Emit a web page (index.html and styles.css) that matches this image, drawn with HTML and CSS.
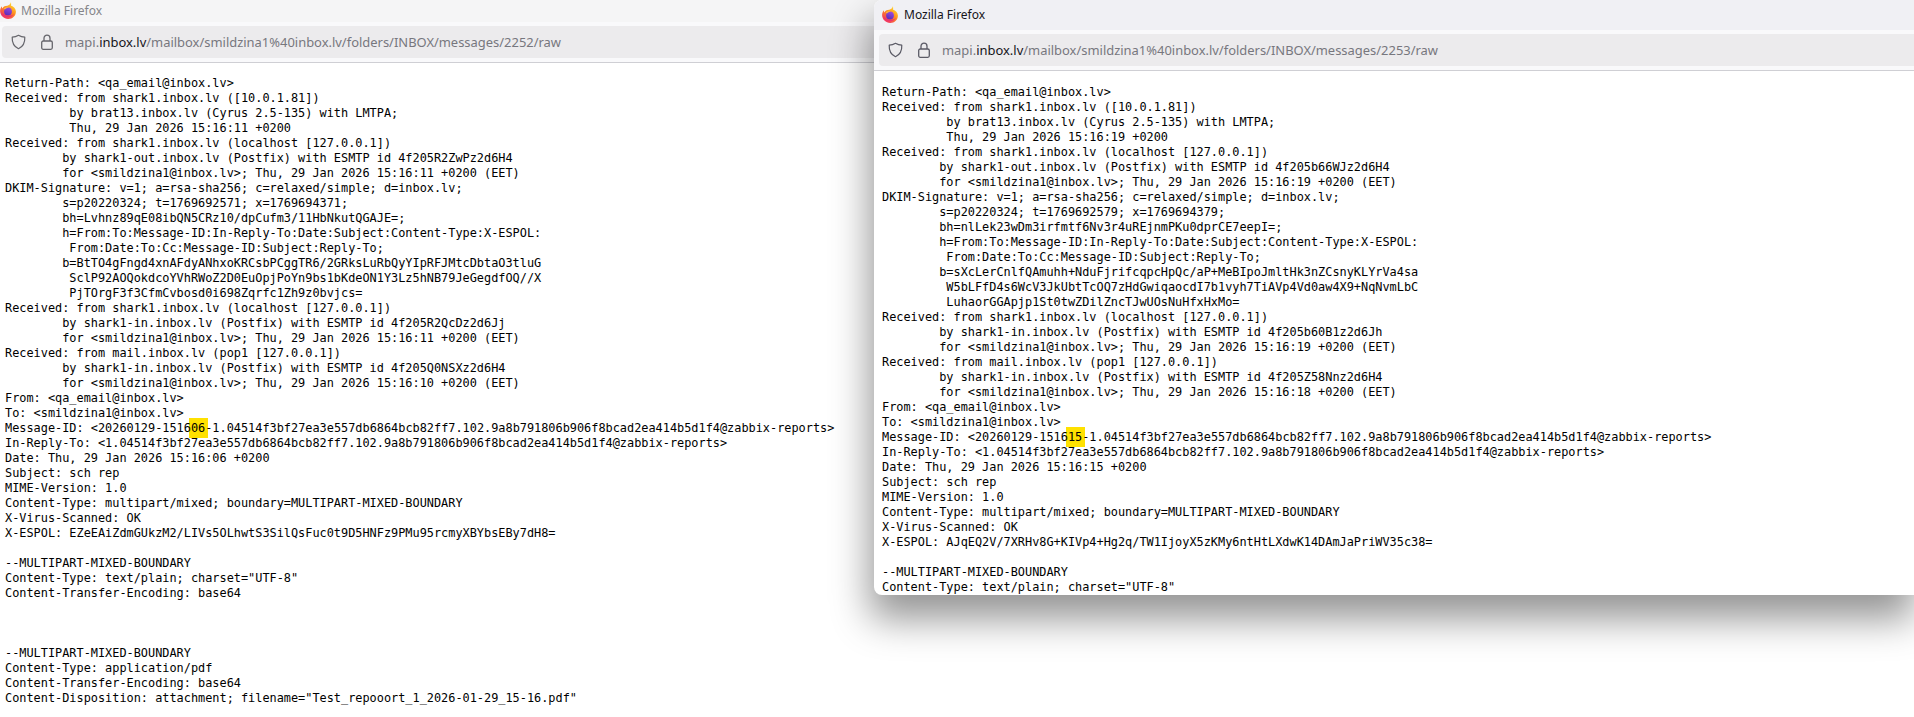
FILE: index.html
```html
<!DOCTYPE html>
<html lang="en">
<head>
<meta charset="utf-8">
<title>Mozilla Firefox</title>
<link rel="stylesheet" href="styles.css">
</head>
<body>
<svg class="defs" width="0" height="0" aria-hidden="true">
<defs>
<linearGradient id="fx-outer" x1="0.8" y1="0.05" x2="0.15" y2="0.95">
<stop offset="0" stop-color="#ffe02e"/><stop offset="0.45" stop-color="#ff8a1f"/><stop offset="1" stop-color="#f0286a"/>
</linearGradient>
<linearGradient id="fx-inner" x1="0.7" y1="0" x2="0.3" y2="1">
<stop offset="0" stop-color="#9a4ce0"/><stop offset="1" stop-color="#5a2bb8"/>
</linearGradient>
<symbol id="firefox" viewBox="0 0 16 17">
<path fill="url(#fx-outer)" d="M10.800 0.200c0.500 1.500 0.400 2.500 0.100 3.400C13.700 4.600 15.800 6.800 15.900 9.400c0.100 4.200-3.300 7.500-7.700 7.500C3.800 16.900 0.100 13.500 0.100 9.100c0-1.900 0.700-3.600 1.700-4.800 0 1 0.200 1.700 0.700 2.100C3.100 5 4.300 4 5.600 3.900 8 3.700 10.400 2.800 10.800 0.200z"/>
<circle cx="8" cy="9.500" r="3.900" fill="url(#fx-inner)"/>
<path fill="#ffb43a" d="M3.800 6.300c1.600-1.400 3.800-1.700 5.600-0.800 -1.800 0-3.100 0.500-4 1.600C5.200 7.800 4.100 7.400 3.800 6.300z"/>
<path fill="#e8336f" d="M1.300 10.200c0.700 3.100 3.600 5 6.800 5 2.800 0 5-1.500 6.200-3.700 -1.400 1.500-3.400 2.300-5.600 2.200C5.900 13.600 3.200 12.400 1.300 10.200z"/>
</symbol>
<symbol id="shield" viewBox="0 0 16 16">
<path fill="none" stroke="currentColor" stroke-width="1.300" stroke-linejoin="round" d="M8 0.800c2.200 1.300 4.300 1.900 6.700 2.100 0.300 5.600-1.900 10-6.700 12.300C3.200 12.900 1 8.500 1.300 2.900 3.700 2.700 5.800 2.100 8 0.800z"/>
</symbol>
<symbol id="lock" viewBox="0 0 12 16">
<path fill="none" stroke="currentColor" stroke-width="1.300" d="M3 7V4.200a3 3 0 0 1 6 0V7"/>
<rect x="0.700" y="7" width="10.600" height="8.300" rx="1.500" fill="none" stroke="currentColor" stroke-width="1.300"/>
</symbol>
</defs>
</svg>

<section class="window back">
<header class="titlebar"><svg class="logo"><use href="#firefox"/></svg><span class="title">Mozilla Firefox</span></header>
<div class="toolbar"><div class="urlbar">
<svg class="shield"><use href="#shield"/></svg><svg class="lock"><use href="#lock"/></svg>
<span class="url">mapi.<b>inbox.lv</b>/mailbox/smildzina1%40inbox.lv/folders/INBOX/messages/2252/raw</span>
</div></div>
<pre class="raw">Return-Path: &lt;qa_email@inbox.lv&gt;
Received: from shark1.inbox.lv ([10.0.1.81])
         by brat13.inbox.lv (Cyrus 2.5-135) with LMTPA;
         Thu, 29 Jan 2026 15:16:11 +0200
Received: from shark1.inbox.lv (localhost [127.0.0.1])
        by shark1-out.inbox.lv (Postfix) with ESMTP id 4f205R2ZwPz2d6H4
        for &lt;smildzina1@inbox.lv&gt;; Thu, 29 Jan 2026 15:16:11 +0200 (EET)
DKIM-Signature: v=1; a=rsa-sha256; c=relaxed/simple; d=inbox.lv;
        s=p20220324; t=1769692571; x=1769694371;
        bh=Lvhnz89qE08ibQN5CRz10/dpCufm3/11HbNkutQGAJE=;
        h=From:To:Message-ID:In-Reply-To:Date:Subject:Content-Type:X-ESPOL:
         From:Date:To:Cc:Message-ID:Subject:Reply-To;
        b=BtTO4gFngd4xnAFdyANhxoKRCsbPCggTR6/2GRksLuRbQyYIpRFJMtcDbtaO3tluG
         SclP92AOQokdcoYVhRWoZ2D0EuOpjPoYn9bs1bKdeON1Y3Lz5hNB79JeGegdfOQ//X
         PjTOrgF3f3CfmCvbosd0i698Zqrfc1Zh9z0bvjcs=
Received: from shark1.inbox.lv (localhost [127.0.0.1])
        by shark1-in.inbox.lv (Postfix) with ESMTP id 4f205R2QcDz2d6Jj
        for &lt;smildzina1@inbox.lv&gt;; Thu, 29 Jan 2026 15:16:11 +0200 (EET)
Received: from mail.inbox.lv (pop1 [127.0.0.1])
        by shark1-in.inbox.lv (Postfix) with ESMTP id 4f205Q0NSXz2d6H4
        for &lt;smildzina1@inbox.lv&gt;; Thu, 29 Jan 2026 15:16:10 +0200 (EET)
From: &lt;qa_email@inbox.lv&gt;
To: &lt;smildzina1@inbox.lv&gt;
Message-ID: &lt;20260129-1516<mark class="mark">06</mark>-1.04514f3bf27ea3e557db6864bcb82ff7.102.9a8b791806b906f8bcad2ea414b5d1f4@zabbix-reports&gt;
In-Reply-To: &lt;1.04514f3bf27ea3e557db6864bcb82ff7.102.9a8b791806b906f8bcad2ea414b5d1f4@zabbix-reports&gt;
Date: Thu, 29 Jan 2026 15:16:06 +0200
Subject: sch rep
MIME-Version: 1.0
Content-Type: multipart/mixed; boundary=MULTIPART-MIXED-BOUNDARY
X-Virus-Scanned: OK
X-ESPOL: EZeEAiZdmGUkzM2/LIVs5OLhwtS3SilQsFuc0t9D5HNFz9PMu95rcmyXBYbsEBy7dH8=

--MULTIPART-MIXED-BOUNDARY
Content-Type: text/plain; charset="UTF-8"
Content-Transfer-Encoding: base64



--MULTIPART-MIXED-BOUNDARY
Content-Type: application/pdf
Content-Transfer-Encoding: base64
Content-Disposition: attachment; filename="Test_repooort_1_2026-01-29_15-16.pdf"</pre>
</section>

<section class="window front">
<header class="titlebar"><svg class="logo"><use href="#firefox"/></svg><span class="title">Mozilla Firefox</span></header>
<div class="toolbar"><div class="urlbar">
<svg class="shield"><use href="#shield"/></svg><svg class="lock"><use href="#lock"/></svg>
<span class="url">mapi.<b>inbox.lv</b>/mailbox/smildzina1%40inbox.lv/folders/INBOX/messages/2253/raw</span>
</div></div>
<pre class="raw">Return-Path: &lt;qa_email@inbox.lv&gt;
Received: from shark1.inbox.lv ([10.0.1.81])
         by brat13.inbox.lv (Cyrus 2.5-135) with LMTPA;
         Thu, 29 Jan 2026 15:16:19 +0200
Received: from shark1.inbox.lv (localhost [127.0.0.1])
        by shark1-out.inbox.lv (Postfix) with ESMTP id 4f205b66WJz2d6H4
        for &lt;smildzina1@inbox.lv&gt;; Thu, 29 Jan 2026 15:16:19 +0200 (EET)
DKIM-Signature: v=1; a=rsa-sha256; c=relaxed/simple; d=inbox.lv;
        s=p20220324; t=1769692579; x=1769694379;
        bh=nlLek23wDm3irfmtf6Nv3r4uREjnmPKu0dprCE7eepI=;
        h=From:To:Message-ID:In-Reply-To:Date:Subject:Content-Type:X-ESPOL:
         From:Date:To:Cc:Message-ID:Subject:Reply-To;
        b=sXcLerCnlfQAmuhh+NduFjrifcqpcHpQc/aP+MeBIpoJmltHk3nZCsnyKLYrVa4sa
         W5bLFfD4s6WcV3JkUbtTcOQ7zHdGwiqaocdI7b1vyh7TiAVp4Vd0aw4X9+NqNvmLbC
         LuhaorGGApjp1St0twZDilZncTJwUOsNuHfxHxMo=
Received: from shark1.inbox.lv (localhost [127.0.0.1])
        by shark1-in.inbox.lv (Postfix) with ESMTP id 4f205b60B1z2d6Jh
        for &lt;smildzina1@inbox.lv&gt;; Thu, 29 Jan 2026 15:16:19 +0200 (EET)
Received: from mail.inbox.lv (pop1 [127.0.0.1])
        by shark1-in.inbox.lv (Postfix) with ESMTP id 4f205Z58Nnz2d6H4
        for &lt;smildzina1@inbox.lv&gt;; Thu, 29 Jan 2026 15:16:18 +0200 (EET)
From: &lt;qa_email@inbox.lv&gt;
To: &lt;smildzina1@inbox.lv&gt;
Message-ID: &lt;20260129-1516<mark class="mark">15</mark>-1.04514f3bf27ea3e557db6864bcb82ff7.102.9a8b791806b906f8bcad2ea414b5d1f4@zabbix-reports&gt;
In-Reply-To: &lt;1.04514f3bf27ea3e557db6864bcb82ff7.102.9a8b791806b906f8bcad2ea414b5d1f4@zabbix-reports&gt;
Date: Thu, 29 Jan 2026 15:16:15 +0200
Subject: sch rep
MIME-Version: 1.0
Content-Type: multipart/mixed; boundary=MULTIPART-MIXED-BOUNDARY
X-Virus-Scanned: OK
X-ESPOL: AJqEQ2V/7XRHv8G+KIVp4+Hg2q/TW1IjoyX5zKMy6ntHtLXdwK14DAmJaPriWV35c38=

--MULTIPART-MIXED-BOUNDARY
Content-Type: text/plain; charset="UTF-8"</pre>
</section>
</body>
</html>
```

FILE: styles.css
```css
html, body {
  margin: 0;
  padding: 0;
  width: 1914px;
  height: 717px;
  overflow: hidden;
  background: #fff;
}

.defs {
  position: absolute;
}

.window {
  display: flex;
  flex-direction: column;
  background: #fff;
  overflow: hidden;
  isolation: isolate;
}

.back {
  width: 1914px;
  height: 717px;
}

.front {
  position: absolute;
  left: 874px;
  top: 0;
  width: 1040px;
  height: 595px;
  border-radius: 8px 0 0 8px;
  box-shadow: -2px 22px 38px 2px rgba(0, 0, 0, 0.42);
}

.titlebar {
  display: flex;
  align-items: center;
  flex: none;
  font-family: "Noto Sans", sans-serif;
  font-size: 12px;
}

.back .titlebar {
  height: 22px;
  padding-bottom: 1px;
  box-sizing: border-box;
  gap: 5px;
  background: #f5f5f6;
  color: #85858a;
}

.front .titlebar {
  height: 30px;
  padding: 0 0 1px 8px;
  box-sizing: border-box;
  gap: 6px;
  background: #f0f0f4;
  color: #15141a;
}

.logo {
  width: 16px;
  height: 17px;
  flex: none;
}

.toolbar {
  flex: none;
  background: #f9f9fb;
  border-bottom: 1px solid #cfcfd4;
}

.back .toolbar {
  padding: 4px 0 4px 2px;
}

.front .toolbar {
  padding: 4px 0 4px 5px;
}

.urlbar {
  display: flex;
  align-items: center;
  height: 32px;
  border-radius: 4px 0 0 4px;
  background: #ecebed;
  color: #5b5b66;
}

.back .urlbar {
  color: #66666c;
}

.shield {
  width: 15px;
  height: 16px;
  margin-left: 9px;
  flex: none;
}

.lock {
  width: 12px;
  height: 16px;
  margin-left: 15px;
  flex: none;
}

.url {
  margin-left: 12px;
  font-family: "Noto Sans", sans-serif;
  font-size: 12.94px;
  white-space: nowrap;
  color: #77777e;
}

.url b {
  font-weight: 400;
  color: #15141a;
}

.raw {
  margin: 0;
  font-family: "DejaVu Sans Mono", monospace;
  font-size: 11.88px;
  line-height: 15px;
  color: #000;
  white-space: pre;
}

.back .raw {
  padding: 13px 0 0 5px;
}

.front .raw {
  padding: 14px 0 0 8px;
}

.mark {
  position: relative;
  background: none;
  color: inherit;
}

.mark::before {
  content: "";
  position: absolute;
  z-index: -1;
  left: -2px;
  right: -2.5px;
  top: -3px;
  bottom: -3px;
  background: #ffe100;
}
```
